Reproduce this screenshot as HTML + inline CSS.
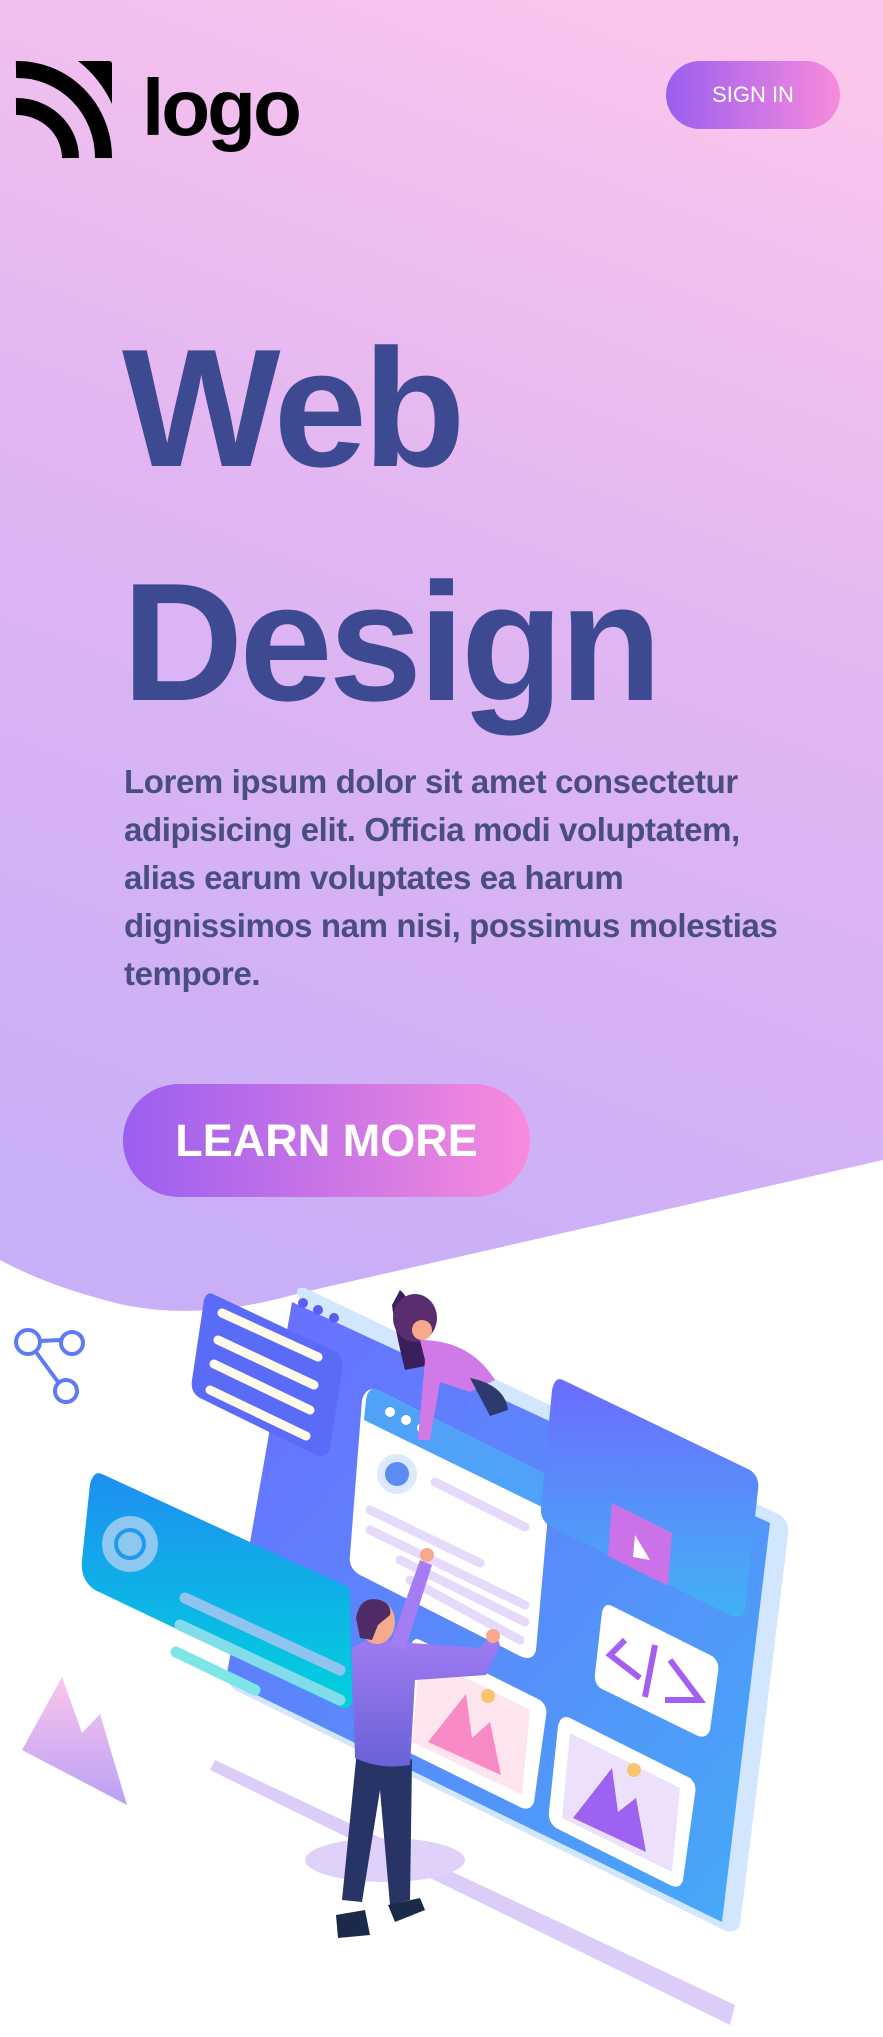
<!DOCTYPE html>
<html><head><meta charset="utf-8"><style>
*{margin:0;padding:0;box-sizing:border-box}
html,body{width:883px;height:2037px;overflow:hidden;background:#fff;font-family:"Liberation Sans",sans-serif}
.abs{position:absolute}
#bg{position:absolute;left:0;top:0}
.logo-t{left:142px;top:68px;font-size:80px;font-weight:bold;color:#000;letter-spacing:-3px;line-height:1}
.signin{left:666px;top:61px;width:174px;height:68px;border-radius:34px;background:linear-gradient(90deg,#9b5ef0,#f88bdc);color:#fff;font-size:22px;text-align:center;line-height:68px}
.h{left:122px;font-size:168px;font-weight:bold;color:#3d4a91;letter-spacing:-4px;line-height:1;white-space:nowrap}
.p{left:124px;top:758px;font-size:33px;font-weight:bold;color:#4a4e7e;line-height:48px;white-space:nowrap;letter-spacing:-0.4px}
.btn{left:123px;top:1084px;width:407px;height:113px;border-radius:56px;background:linear-gradient(90deg,#9b5ef0,#f88bdc);color:#fff;font-size:45px;font-weight:bold;text-align:center;line-height:113px}
</style></head><body>
<svg id="bg" width="883" height="2037" viewBox="0 0 883 2037">
<defs>
<linearGradient id="g1" x1="0.75" y1="0" x2="0.5" y2="1"><stop offset="0" stop-color="#fcc6ec"/><stop offset="0.45" stop-color="#e1b6f2"/><stop offset="1" stop-color="#c9aff7"/></linearGradient>
<linearGradient id="blue" x1="0" y1="0" x2="1" y2="1"><stop offset="0" stop-color="#6b6cff"/><stop offset="1" stop-color="#45abf6"/></linearGradient>
<linearGradient id="teal" x1="0" y1="0" x2="0" y2="1"><stop offset="0" stop-color="#1e8ff2"/><stop offset="1" stop-color="#00d2dc"/></linearGradient>
<linearGradient id="pur" x1="0" y1="0" x2="0" y2="1"><stop offset="0" stop-color="#6d6cff"/><stop offset="1" stop-color="#41b2f5"/></linearGradient>
<linearGradient id="tri" x1="0" y1="0" x2="0" y2="1"><stop offset="0" stop-color="#fbc6ec"/><stop offset="1" stop-color="#b9a0f5"/></linearGradient>
<linearGradient id="man" x1="0" y1="0" x2="0" y2="1"><stop offset="0" stop-color="#a47cf3"/><stop offset="1" stop-color="#6a62d8"/></linearGradient>
</defs>
<path d="M0 0H883V1160L300 1293Q200 1322 120 1304Q50 1287 0 1260Z" fill="url(#g1)"/>
<!-- logo icon -->
<g fill="none" stroke="#000" stroke-width="17">
<path d="M16 69.5 A86 88 0 0 1 103.5 158"/>
<path d="M16 106.5 A54 52 0 0 1 70.5 158"/>
</g>
<path d="M78 61 H109 Q112 61 112 64 V104 Q100 78 78 61Z" fill="#000"/>
<!-- share icon -->
<g fill="none" stroke="#5d7af7" stroke-width="4"><circle cx="28" cy="1342" r="12"/><circle cx="72" cy="1343" r="11"/><circle cx="66" cy="1391" r="11"/><path d="M40 1341 L61 1340 M36 1352 L58 1382"/></g>
<!-- triangle -->
<path d="M22 1750 L62 1677 L82 1733 L100 1714 L127 1805Z" fill="url(#tri)"/>
<!-- shadows -->
<path d="M215 1760 L735 2005 L730 2025 L210 1770Z" fill="#dccdf8"/>
<ellipse cx="385" cy="1860" rx="80" ry="22" fill="#e0d1fa"/>
<!-- main panel -->
<path d="M300 1300 Q292 1286 305 1288 L780 1515 Q790 1522 788 1535 L740 1925 Q735 1935 724 1930 L235 1690 Q225 1683 227 1670Z" fill="#d2e6fd"/>
<path d="M292 1302 L770 1523 L722 1922 L226 1680Z" fill="url(#blue)"/>
<circle cx="303" cy="1303" r="5" fill="#5a5ef0"/><circle cx="318" cy="1310" r="5" fill="#5a5ef0"/><circle cx="334" cy="1318" r="5" fill="#5a5ef0"/>
<!-- lines card -->
<path d="M215 1295 L336 1352 Q344 1358 342 1370 L330 1448 Q326 1460 314 1454 L200 1398 Q190 1392 192 1380 L204 1300 Q207 1290 215 1295Z" fill="#5a6cf7"/>
<g stroke="#fffaef" stroke-width="9" stroke-linecap="round"><path d="M222 1313 L318 1357 M218 1340 L314 1385 M214 1364 L310 1410 M210 1390 L306 1436"/></g>
<!-- teal card -->
<path d="M102 1474 L350 1588 L352 1700 Q350 1712 338 1706 L95 1590 Q80 1580 82 1560 L90 1484 Q94 1470 102 1474Z" fill="url(#teal)"/>
<circle cx="130" cy="1544" r="28" fill="#8ec7f0"/><circle cx="130" cy="1544" r="14" fill="none" stroke="#1e9aef" stroke-width="4"/>
<g stroke-linecap="round" stroke-width="11"><path d="M185 1598 L340 1670" stroke="#8fc4f1"/><path d="M180 1625 L340 1700" stroke="#83dcea"/><path d="M176 1652 L255 1690" stroke="#7fe6e8"/></g>
<!-- white browser -->
<path d="M378 1390 L543 1473 Q552 1480 550 1492 L536 1650 Q533 1662 520 1656 L360 1575 Q348 1568 350 1555 L362 1400 Q366 1386 378 1390Z" fill="#fff"/>
<path d="M378 1390 L543 1473 Q552 1480 550 1492 L548 1510 L364 1420 L366 1400 Q368 1386 378 1390Z" fill="#4fa2f7"/>
<circle cx="390" cy="1412" r="5" fill="#fff"/><circle cx="406" cy="1420" r="5" fill="#fff"/><circle cx="422" cy="1428" r="5" fill="#fff"/>
<circle cx="397" cy="1474" r="20" fill="#dde9fd"/><circle cx="397" cy="1474" r="12" fill="#5b8cf4"/>
<g stroke="#e6dafa" stroke-width="9" stroke-linecap="round"><path d="M435 1482 L525 1527 M370 1510 L480 1563 M370 1530 L525 1605 M400 1560 L525 1622 M410 1580 L520 1640"/></g>
<!-- video card -->
<path d="M563 1380 L750 1470 Q760 1477 758 1490 L745 1610 Q742 1620 730 1615 L548 1525 Q540 1518 541 1508 L552 1390 Q555 1376 563 1380Z" fill="url(#pur)"/>
<path d="M612 1503 L672 1533 L668 1586 L608 1556Z" fill="#cc72e8"/><path d="M635 1535 L650 1560 L633 1557Z" fill="#fff"/>
<!-- code card -->
<path d="M612 1606 L712 1656 Q720 1662 718 1672 L710 1730 Q706 1740 696 1735 L600 1688 Q594 1683 595 1674 L602 1612 Q605 1602 612 1606Z" fill="#fff"/>
<g stroke="#a35ff0" stroke-width="6" fill="none"><path d="M625 1640 L610 1655 L640 1678 M655 1645 L645 1697 M670 1660 L700 1700 L665 1700"/></g>
<!-- image cards -->
<path d="M420 1640 L540 1700 Q548 1706 546 1716 L534 1802 Q530 1812 520 1807 L408 1752 Q400 1746 401 1736 L410 1648 Q413 1636 420 1640Z" fill="#fff"/>
<path d="M420 1655 L530 1710 L522 1795 L412 1742Z" fill="#fde4ef"/>
<path d="M428 1742 L466 1694 L472 1738 L490 1722 L501 1775Z" fill="#f88ac6"/><circle cx="488" cy="1696" r="7" fill="#f8c56c"/>
<path d="M570 1718 L690 1778 Q697 1784 695 1794 L683 1880 Q680 1890 670 1885 L556 1828 Q548 1822 549 1812 L558 1726 Q561 1714 570 1718Z" fill="#fff"/>
<path d="M570 1733 L680 1788 L672 1872 L562 1818Z" fill="#ede0fb"/>
<path d="M573 1818 L612 1768 L618 1812 L636 1798 L646 1852Z" fill="#9d62ef"/><circle cx="634" cy="1770" r="7" fill="#f8c56c"/>
<!-- woman -->
<path d="M400 1290 Q410 1298 420 1330 L430 1365 L405 1370 Q395 1330 392 1305Z" fill="#3a1f5a"/>
<ellipse cx="415" cy="1318" rx="22" ry="24" fill="#5a2d6e"/>
<path d="M420 1340 Q470 1340 495 1380 L470 1392 L440 1382 L430 1440 L418 1440 L425 1360Z" fill="#d07ae8"/>
<path d="M470 1378 Q505 1385 508 1410 L490 1416Z" fill="#2e3a6e"/>
<circle cx="422" cy="1330" r="10" fill="#f7a98c"/>
<!-- man -->
<path d="M360 1720 L342 1900 L362 1902 L380 1790 L390 1905 L410 1900 L412 1760Z" fill="#283366"/>
<path d="M336 1915 L365 1910 L370 1935 L338 1938Z M388 1905 L420 1898 L425 1910 L395 1922Z" fill="#1b2a4a"/>
<path d="M352 1648 Q370 1635 398 1642 L480 1648 L495 1630 L500 1645 L486 1675 L415 1680 L410 1765 Q380 1770 355 1758Z" fill="url(#man)"/>
<path d="M390 1645 L420 1560 L432 1565 L405 1650Z" fill="#a47cf3"/>
<circle cx="427" cy="1555" r="7" fill="#f7a98c"/><circle cx="493" cy="1636" r="7" fill="#f7a98c"/>
<ellipse cx="377" cy="1622" rx="18" ry="22" fill="#f7a98c"/>
<path d="M356 1618 Q360 1595 380 1600 Q392 1604 390 1615 L378 1625 L372 1640 L360 1638Z" fill="#4f2b66"/>
</svg>
<div class="abs logo-t">logo</div>
<div class="abs signin">SIGN IN</div>
<div class="abs h" style="top:324px">Web</div>
<div class="abs h" style="top:558px">Design</div>
<div class="abs p">Lorem ipsum dolor sit amet consectetur<br>adipisicing elit. Officia modi voluptatem,<br>alias earum voluptates ea harum<br>dignissimos nam nisi, possimus molestias<br>tempore.</div>
<div class="abs btn">LEARN MORE</div>
</body></html>
